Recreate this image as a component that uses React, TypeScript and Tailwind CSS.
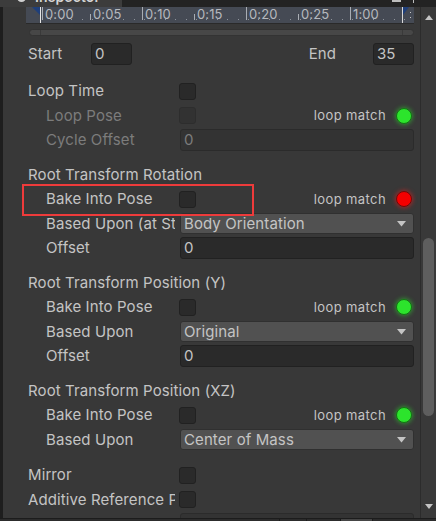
import React from 'react';

type Dot = 'green' | 'red';

const rowH = 'h-[24.5px]';

function Checkbox({ disabled = false }: { disabled?: boolean }) {
  return (
    <div
      className={`w-[17px] h-[17px] rounded-[3px] border ${
        disabled ? 'bg-[#323232] border-[#2d2d2d]' : 'bg-[#2a2a2a] border-[#212121]'
      }`}
    />
  );
}

function LoopDot({ color }: { color: Dot }) {
  return color === 'green' ? (
    <div className="w-[16px] h-[16px] rounded-full bg-[#2ce42c] border border-[#137313] shadow-[0_0_4px_1px_rgba(50,230,50,0.45)]" />
  ) : (
    <div className="w-[16px] h-[16px] rounded-full bg-[#f40000] border border-[#6e0a0a] shadow-[0_0_4px_1px_rgba(255,30,30,0.5)]" />
  );
}

function LoopMatch({ color }: { color: Dot }) {
  return (
    <div className="ml-auto flex items-center gap-[10px] pr-[2px]">
      <span className="text-[13px] tracking-[0.4px]">loop match</span>
      <LoopDot color={color} />
    </div>
  );
}

function TextField({ value, disabled = false }: { value: string; disabled?: boolean }) {
  return (
    <div
      className={`ml-[1px] flex-1 h-[22px] rounded-[3px] border px-[3px] flex items-center ${
        disabled ? 'bg-[#333333] border-[#2b2b2b] text-[#7c7c7c]' : 'bg-[#2a2a2a] border-[#212121]'
      }`}
    >
      {value}
    </div>
  );
}

function Dropdown({ value }: { value: string }) {
  return (
    <div className="ml-[1px] flex-1 h-[21px] rounded-[3px] border border-[#303030] bg-[#515151] pl-[3px] pr-[7px] flex items-center justify-between">
      <span>{value}</span>
      <svg width="9" height="6" viewBox="0 0 9 6">
        <path d="M0 0 H9 L4.5 5.5 Z" fill="#c4c4c4" />
      </svg>
    </div>
  );
}

function Header({ label, className = '' }: { label: string; className?: string }) {
  return (
    <div className={`${rowH} flex items-center shrink-0 pl-[2px] whitespace-nowrap ${className}`}>{label}</div>
  );
}

function Row({
  label,
  indent = false,
  disabled = false,
  className = '',
  children,
}: {
  label: string;
  indent?: boolean;
  disabled?: boolean;
  className?: string;
  children?: React.ReactNode;
}) {
  return (
    <div className={`${rowH} flex items-center shrink-0 pl-[2px] ${className}`}>
      <div className={`w-[151px] shrink-0 pr-[4px] ${indent ? 'pl-[18px]' : ''}`}>
        <div className={`overflow-hidden whitespace-nowrap ${disabled ? 'text-[#7c7c7c]' : ''}`}>{label}</div>
      </div>
      <div className="flex-1 flex items-center">{children}</div>
    </div>
  );
}

const marks = [
  { x: 17, label: '0:00', tall: true },
  { x: 65, label: '0:05', tall: false },
  { x: 117, label: '0:10', tall: true },
  { x: 169, label: '0:15', tall: false },
  { x: 221, label: '0:20', tall: true },
  { x: 273, label: '0:25', tall: false },
  { x: 325, label: '1:00', tall: true },
];

function Timeline() {
  const dots: number[] = [];
  for (let i = 0; i < 37; i++) dots.push(14 + i * 10.4);
  return (
    <div className="relative h-[16px] bg-[#454a54] overflow-hidden shrink-0 text-[13px] text-[#b6b9be]">
      {dots.map((d) => (
        <div key={d} className="absolute bottom-[3px] w-[1px] h-[1px] bg-[#8e939b]" style={{ left: d }} />
      ))}
      {marks.map((m) => (
        <React.Fragment key={m.label}>
          <div
            className={`absolute bottom-[3px] w-[1px] bg-[#a9adb4] ${m.tall ? 'h-[13px]' : 'h-[6px]'}`}
            style={{ left: m.x - 1 }}
          />
          <span className="absolute top-[-2px] leading-[18px]" style={{ left: m.x + 2 }}>
            {m.label}
          </span>
        </React.Fragment>
      ))}
      <div className="absolute left-[14px] top-0 w-[1px] h-[16px] bg-[#e6e6e6]" />
      <svg className="absolute left-[6px] top-0" width="8" height="8" viewBox="0 0 8 8">
        <path d="M0 0 H8 V8 Z" fill="#1f3f7a" />
      </svg>
      <div className="absolute left-[376px] top-0 w-[1px] h-[16px] bg-[#d8d8d8]" />
      <svg className="absolute left-[377px] top-0" width="6" height="8" viewBox="0 0 6 8">
        <path d="M0 0 H6 L0 8 Z" fill="#1f3f7a" />
      </svg>
      <div className="absolute left-[384px] top-[5px] w-[1px] h-[1px] bg-[#c8c8c8]" />
      <div className="absolute left-[384px] top-[10px] w-[1px] h-[1px] bg-[#c8c8c8]" />
    </div>
  );
}

export default function App() {
  return (
    <div className="w-[436px] h-[521px] bg-[#383838] overflow-hidden flex flex-col relative font-['Inter',sans-serif] text-[15px] tracking-[0.1px] text-[#c4c4c4]">
      {/* tab strip */}
      <div className="h-[7px] shrink-0 flex bg-[#232323]">
        <div className="w-[122px] bg-[#3c3c3c] relative overflow-hidden">
          <div className="absolute left-[17px] top-[-8px] w-[9px] h-[10px] rounded-full bg-[#d0d0d0]" />
          <span className="absolute left-[35px] top-[-14px] text-[14px] font-semibold text-[#d4d4d4]">Inspector</span>
        </div>
        <div className="flex-1" />
        <div className="w-[9px] h-[2px] bg-[#bdbdbd] mr-[12px]" />
        <div className="w-[1px] h-[3px] bg-[#bdbdbd] mr-[22px]" />
      </div>

      <div className="flex flex-1 min-h-0">
        <div className="w-[3px] bg-[#1e1e1e]" />

        {/* content */}
        <div className="flex-1 flex flex-col pl-[23px] pr-[6px] overflow-hidden">
          <Timeline />
          <div className="h-[1px] bg-[#2a2a2a] shrink-0" />
          <div className="mt-[5px] ml-[3px] h-[7px] shrink-0 rounded-full bg-[#474747] border border-[#333333] flex">
            <div className="w-[11px] border-r border-[#3a3a3a]" />
            <div className="flex-1" />
            <div className="w-[11px] border-l border-[#3a3a3a]" />
          </div>

          <div className="mt-[7px] h-[22px] shrink-0 flex items-center pl-[2px]">
            <span className="w-[63px]">Start</span>
            <div className="w-[41px] h-[22px] rounded-[3px] bg-[#2a2a2a] border border-[#212121] px-[3px] flex items-center">0</div>
            <span className="ml-auto mr-[37px]">End</span>
            <div className="w-[41px] h-[22px] rounded-[3px] bg-[#2a2a2a] border border-[#212121] px-[3px] flex items-center">35</div>
          </div>

          <Row label="Loop Time" className="mt-[14px]">
            <Checkbox />
          </Row>
          <Row label="Loop Pose" indent disabled>
            <Checkbox disabled />
            <LoopMatch color="green" />
          </Row>
          <Row label="Cycle Offset" indent disabled>
            <TextField value="0" disabled />
          </Row>

          <Header label="Root Transform Rotation" className="mt-[10px]" />
          <Row label="Bake Into Pose" indent>
            <Checkbox />
            <LoopMatch color="red" />
          </Row>
          <Row label="Based Upon (at Start)" indent>
            <Dropdown value="Body Orientation" />
          </Row>
          <Row label="Offset" indent>
            <TextField value="0" />
          </Row>

          <Header label="Root Transform Position (Y)" className="mt-[10px]" />
          <Row label="Bake Into Pose" indent>
            <Checkbox />
            <LoopMatch color="green" />
          </Row>
          <Row label="Based Upon" indent>
            <Dropdown value="Original" />
          </Row>
          <Row label="Offset" indent>
            <TextField value="0" />
          </Row>

          <Header label="Root Transform Position (XZ)" className="mt-[10px]" />
          <Row label="Bake Into Pose" indent>
            <Checkbox />
            <LoopMatch color="green" />
          </Row>
          <Row label="Based Upon" indent>
            <Dropdown value="Center of Mass" />
          </Row>

          <Row label="Mirror" className="mt-[11px]">
            <Checkbox />
          </Row>
          <Row label="Additive Reference Pose">
            <Checkbox />
          </Row>
          <Row label="Pose Frame" indent disabled>
            <TextField value="0" disabled />
          </Row>
        </div>

        {/* vertical scrollbar */}
        <div className="w-[16px] border-l border-[#2c2c2c] bg-[#393939] flex flex-col items-center pt-[8px] pb-[9px]">
          <svg width="8" height="5" viewBox="0 0 8 5">
            <path d="M0 5 H8 L4 0 Z" fill="#c4c4c4" />
          </svg>
          <div className="flex-1 w-full pl-[2px] pr-[2px] pt-[218px] pb-[88px]">
            <div className="h-full w-[11px] rounded-full bg-[#5e5e5e]" />
          </div>
          <svg width="8" height="5" viewBox="0 0 8 5">
            <path d="M0 0 H8 L4 5 Z" fill="#c4c4c4" />
          </svg>
        </div>
      </div>

      {/* bottom bar */}
      <div className="h-[3px] shrink-0 bg-[#2c2c2c] border-t border-[#1c1c1c] flex">
        <div className="w-[279px]" />
        <div className="w-[27px] border-l border-[#1c1c1c]" />
        <div className="w-[34px] border-l border-[#1c1c1c]" />
        <div className="w-[32px] border-l border-[#1c1c1c] bg-[#454545]" />
        <div className="flex-1 border-l border-[#1c1c1c]" />
      </div>

      {/* highlight annotation */}
      <div className="absolute left-[22px] top-[184px] w-[232px] h-[32px] border-2 border-[#ee3b3b]" />
    </div>
  );
}
